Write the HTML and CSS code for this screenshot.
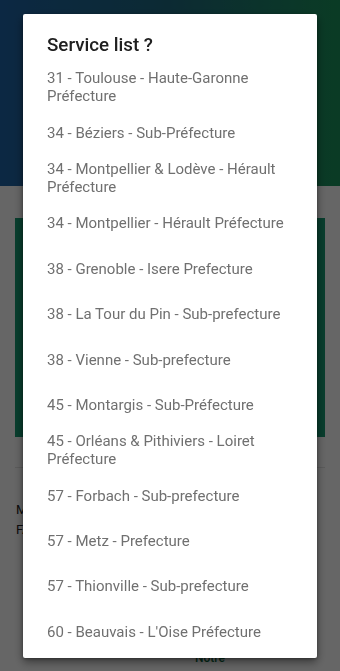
FILE: index.html
```html
<!DOCTYPE html>
<html lang="fr">
<head>
<meta charset="utf-8">
<title>Service list</title>
<link rel="stylesheet" href="styles.css">
</head>
<body>
<div class="page">
  <header class="hero"></header>
  <main class="content">
    <section class="card"></section>
    <hr class="divider">
    <p class="info">Mes</p>
    <p class="info">FAQ</p>
  </main>
  <footer class="foot"><span class="foot-link">Notre</span></footer>
</div>

<div class="scrim">
  <div class="dialog" role="dialog" aria-labelledby="dlg-title">
    <h2 class="dialog-title" id="dlg-title">Service list ?</h2>
    <ul class="items">
      <li class="item">31 - Toulouse - Haute-Garonne Préfecture</li>
      <li class="item">34 - Béziers - Sub-Préfecture</li>
      <li class="item">34 - Montpellier &amp; Lodève - Hérault Préfecture</li>
      <li class="item">34 - Montpellier - Hérault Préfecture</li>
      <li class="item">38 - Grenoble - Isere Prefecture</li>
      <li class="item">38 - La Tour du Pin - Sub-prefecture</li>
      <li class="item">38 - Vienne - Sub-prefecture</li>
      <li class="item">45 - Montargis - Sub-Préfecture</li>
      <li class="item">45 - Orléans &amp; Pithiviers - Loiret Préfecture</li>
      <li class="item">57 - Forbach - Sub-prefecture</li>
      <li class="item">57 - Metz - Prefecture</li>
      <li class="item">57 - Thionville - Sub-prefecture</li>
      <li class="item">60 - Beauvais - L'Oise Préfecture</li>
    </ul>
  </div>
</div>
</body>
</html>
```
FILE: styles.css
```css
* { box-sizing: border-box; }
html, body {
  margin: 0;
  padding: 0;
  width: 340px;
  height: 671px;
  overflow: hidden;
  background: #ffffff;
  font-family: Roboto, "Noto Sans", "Liberation Sans", sans-serif;
}
.page {
  width: 340px;
  height: 671px;
  display: flex;
  flex-direction: column;
}
.hero {
  height: 186px;
  flex: none;
  background: linear-gradient(90deg, #2064a8 0%, #1f6a80 50%, #1b955c 100%);
}
.content {
  padding: 32px 15px 0 15px;
  flex: 1;
}
.card {
  height: 219px;
  background: #159a72;
}
.divider {
  margin: 30px 0 0 0;
  border: 0;
  border-top: 1px solid #e4e4e4;
}
.info {
  margin: 0;
  padding-left: 1px;
  font-size: 13px;
  line-height: 20px;
  color: #222;
}
.info:first-of-type { margin-top: 32px; }
.foot {
  flex: none;
  height: 24px;
  padding-left: 195px;
}
.foot-link {
  font-size: 12px;
  line-height: 14px;
  color: #0b6b40;
  font-weight: 500;
}
.scrim {
  position: fixed;
  inset: 0;
  background: rgba(0, 0, 0, 0.6);
  display: flex;
  align-items: center;
  justify-content: center;
}
.dialog {
  width: 294px;
  height: 644px;
  background: #ffffff;
  border-radius: 2px;
  box-shadow: 0 4px 10px rgba(0, 0, 0, 0.45), 0 1px 3px rgba(0, 0, 0, 0.3);
  padding: 19px 0 0 0;
  overflow: hidden;
}
.dialog-title {
  margin: 0;
  padding: 0 24px;
  font-size: 18.75px;
  line-height: 24px;
  font-weight: 500;
  color: #202020;
}
.items {
  list-style: none;
  margin: 8px 0 0 0;
  padding: 0;
}
.item {
  height: 45.4px;
  display: flex;
  align-items: center;
  padding: 0 23px 0 24px;
  font-size: 15px;
  line-height: 18px;
  color: #707070;
}
```
